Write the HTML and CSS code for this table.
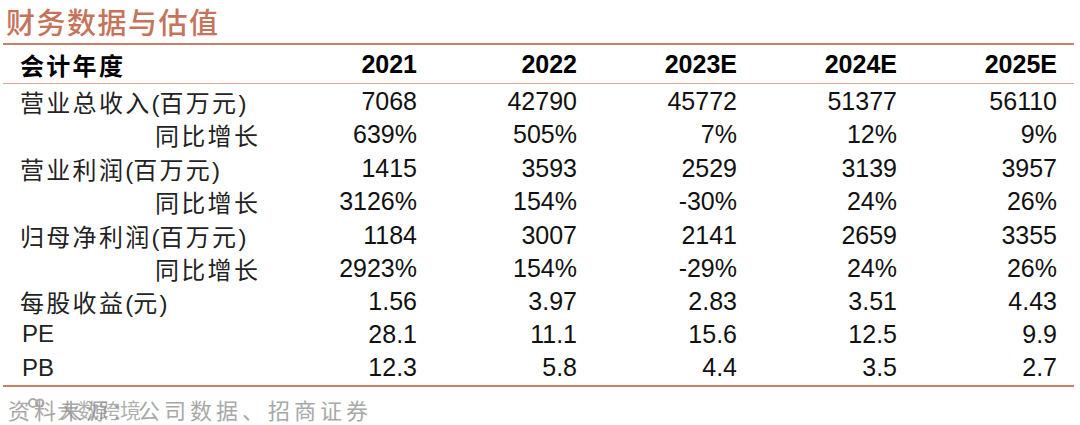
FILE: index.html
```html
<!DOCTYPE html>
<html lang="zh-CN">
<head>
<meta charset="utf-8">
<title>财务数据与估值</title>
<link rel="stylesheet" href="styles.css">
</head>
<body>
<div class="page">
  <h1 class="title">财务数据与估值</h1>
  <div class="table">
    <div class="row head">
      <div class="label">会计年度</div>
      <div class="num">2021</div><div class="num">2022</div><div class="num">2023E</div><div class="num">2024E</div><div class="num">2025E</div>
    </div>
    <div class="row">
      <div class="label">营业总收入<span class="lat">(</span>百万元<span class="lat">)</span></div>
      <div class="num">7068</div><div class="num">42790</div><div class="num">45772</div><div class="num">51377</div><div class="num">56110</div>
    </div>
    <div class="row">
      <div class="label sub">同比增长</div>
      <div class="num">639%</div><div class="num">505%</div><div class="num">7%</div><div class="num">12%</div><div class="num">9%</div>
    </div>
    <div class="row">
      <div class="label">营业利润<span class="lat">(</span>百万元<span class="lat">)</span></div>
      <div class="num">1415</div><div class="num">3593</div><div class="num">2529</div><div class="num">3139</div><div class="num">3957</div>
    </div>
    <div class="row">
      <div class="label sub">同比增长</div>
      <div class="num">3126%</div><div class="num">154%</div><div class="num">-30%</div><div class="num">24%</div><div class="num">26%</div>
    </div>
    <div class="row">
      <div class="label">归母净利润<span class="lat">(</span>百万元<span class="lat">)</span></div>
      <div class="num">1184</div><div class="num">3007</div><div class="num">2141</div><div class="num">2659</div><div class="num">3355</div>
    </div>
    <div class="row">
      <div class="label sub">同比增长</div>
      <div class="num">2923%</div><div class="num">154%</div><div class="num">-29%</div><div class="num">24%</div><div class="num">26%</div>
    </div>
    <div class="row">
      <div class="label">每股收益<span class="lat">(</span>元<span class="lat">)</span></div>
      <div class="num">1.56</div><div class="num">3.97</div><div class="num">2.83</div><div class="num">3.51</div><div class="num">4.43</div>
    </div>
    <div class="row">
      <div class="label lat">PE</div>
      <div class="num">28.1</div><div class="num">11.1</div><div class="num">15.6</div><div class="num">12.5</div><div class="num">9.9</div>
    </div>
    <div class="row">
      <div class="label lat">PB</div>
      <div class="num">12.3</div><div class="num">5.8</div><div class="num">4.4</div><div class="num">3.5</div><div class="num">2.7</div>
    </div>
  </div>
  <div class="source">
    资料来源：公司数据、招商证券
    <span class="watermark"><svg class="wm-logo" width="18" height="14" viewBox="0 0 18 14"><circle cx="6" cy="6" r="4" fill="none" stroke="#999" stroke-width="2"/><circle cx="13" cy="6" r="3.5" fill="none" stroke="#999" stroke-width="2"/></svg>大数跨境</span>
  </div>
</div>
</body>
</html>
```

FILE: styles.css
```css
html, body {
  margin: 0;
  padding: 0;
  background: #ffffff;
}

.page {
  width: 1080px;
  height: 425px;
  padding: 0 6px 0 3px;
  box-sizing: border-box;
  font-family: "Liberation Sans", "Noto Sans CJK SC", sans-serif;
  color: #111;
}

.title {
  margin: 0;
  height: 43px;
  padding-left: 3px;
  box-sizing: border-box;
  font-family: "Noto Sans CJK SC", sans-serif;
  font-size: 29px;
  font-weight: 500;
  line-height: 43px;
  letter-spacing: 1.5px;
  color: #c5735a;
}

.table {
  border-top: 2.5px solid #c7806a;
  border-bottom: 2.5px solid #c7806a;
}

.row {
  display: grid;
  grid-template-columns: 271px repeat(5, 160px);
  height: 33.4px;
  align-items: center;
}

.row.head {
  height: 38px;
  border-bottom: 1.5px solid #dba796;
}

.label {
  padding-left: 17px;
  font-family: "Noto Sans CJK SC", sans-serif;
  font-size: 24px;
  letter-spacing: 2.3px;
  color: #222;
  white-space: nowrap;
}

.label .lat {
  font-family: "Liberation Sans", sans-serif;
  letter-spacing: 0;
}

.label.sub {
  padding-left: 152px;
}

.label.lat {
  font-family: "Liberation Sans", sans-serif;
  letter-spacing: 0;
  padding-left: 19px;
}

.num {
  text-align: right;
  padding-right: 17px;
  font-size: 25px;
  color: #111;
}

.head .label {
  font-weight: 700;
  color: #000;
}

.head .num {
  font-weight: 700;
  color: #000;
}

.source {
  position: relative;
  padding-left: 5px;
  font-family: "Noto Sans CJK SC", sans-serif;
  font-size: 22px;
  letter-spacing: 4px;
  line-height: 44px;
  color: #a8a8a8;
}

.watermark {
  position: absolute;
  left: 24px;
  top: 0;
  display: flex;
  align-items: center;
  font-size: 21px;
  letter-spacing: 0;
  color: rgba(140, 140, 140, 0.7);
}

.wm-logo {
  margin-right: 12px;
  margin-top: -10px;
  opacity: 0.8;
}
```
